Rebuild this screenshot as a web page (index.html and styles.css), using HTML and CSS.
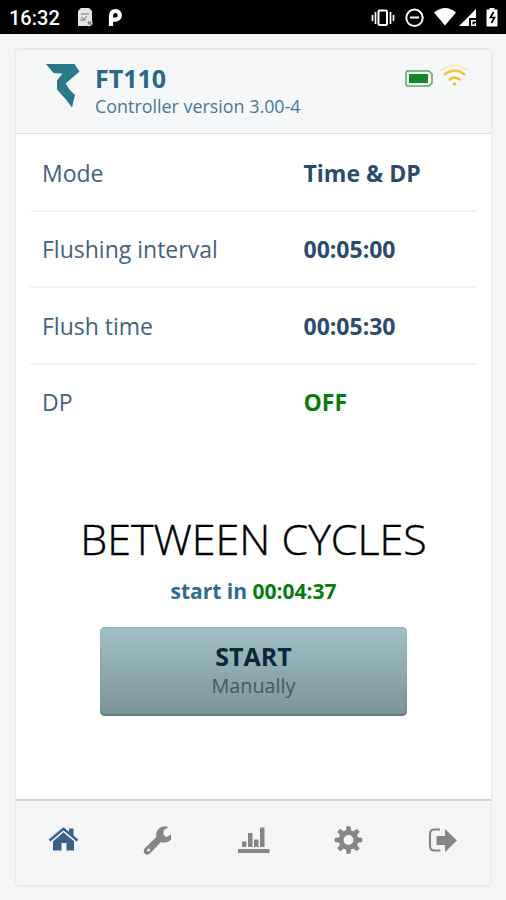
FILE: index.html
```html
<!DOCTYPE html>
<html lang="en">
<head>
<meta charset="utf-8">
<title>FT110</title>
<link rel="stylesheet" href="styles.css">
</head>
<body>
<div class="status">
  <span class="clock">16:32</span>
  <svg class="notices" viewBox="74 4 56 26" width="56" height="26">
    <path fill="#e4e4e4" d="M81 8h8l3 3v11l-2 4H78V11z"/>
    <path fill="none" stroke="#777" d="M81 14h8M81 17l3 2 3-3M80 20h6"/>
    <circle cx="89.500" cy="23" r="2.500" fill="#888" stroke="#eee" stroke-width="1.500" stroke-dasharray="1.500 .7"/>
    <path fill="none" stroke="#fff" stroke-width="4.200" d="M111 26v-9.500q0-5.500 4.500-5.500a4.300 4.300 0 0 1 0 8.600H111"/>
  </svg>
  <svg class="system" viewBox="366 4 140 26" width="140" height="26">
    <g fill="none" stroke="#fff">
      <rect x="378.500" y="10.500" width="8.500" height="14.500" rx="1" stroke-width="2"/>
      <path stroke-width="1.700" d="M375.500 12v12M390.500 12v12M372.500 15v6M393.500 15v6"/>
      <circle cx="414.500" cy="17.800" r="8.200" stroke-width="2"/>
      <path stroke-width="2" d="M410 17.500h9"/>
    </g>
    <g fill="#fff">
      <path d="M434 12.500q11.500-9 22 0L445 25.500z"/>
      <path d="M476 9v9h-7v8h-10z"/>
      <path d="M471 20h5v1.500h-3.500v3h2V23h1.500v3h-5z"/>
      <path d="M489.500 8h5v1.500h3V26.500h-11V9.500h3z"/>
    </g>
    <path fill="none" stroke="#000" stroke-width="1.700" d="M493.500 12l-3 5.500h4l-3 5.500"/>
  </svg>
</div>
<main class="card">
  <header class="header">
    <svg class="logo" viewBox="44 62 38 48" width="38" height="48">
      <path fill="#28788b" d="M46 64h28.500l5 7.500-14 12 4 6 5.500 5.500-1 4-2 8.500-6-8-9-10V80.500l5.500-7-9-.5z"/>
      <path fill="none" stroke="#4d95a4" stroke-width=".5" d="M61 81l15-13M59 87l8 9"/>
    </svg>
    <div class="ident">
      <h1 class="name">FT110</h1>
      <p class="version">Controller version 3.00-4</p>
    </div>
    <svg class="signals" viewBox="404 62 66 28" width="66" height="28">
      <path d="M407 71h22l3 3v9l-3 3h-22l-1-2V73z" fill="#f3fbf4" stroke="#5aa568" stroke-width="1.500"/>
      <path d="M409 74h19v9h-19z" fill="#148529"/>
      <g fill="none" stroke-linecap="round">
        <path stroke="#fbe6a5" stroke-width="1.500" d="M441 70q13.500-9 26 0"/>
        <path stroke="#f9c63a" stroke-width="2.300" d="M444.500 74.500q10-8 20 0"/>
        <path stroke="#f8c02c" stroke-width="2.300" d="M449.500 79.500q5-4 10 0"/>
      </g>
      <circle cx="454.500" cy="84" r="1.800" fill="#f8bd25"/>
    </svg>
  </header>
  <section class="rows">
    <div class="row"><span class="label">Mode</span><b class="value">Time &amp; DP</b></div>
    <div class="row"><span class="label">Flushing interval</span><b class="value">00:05:00</b></div>
    <div class="row"><span class="label">Flush time</span><b class="value">00:05:30</b></div>
    <div class="row"><span class="label">DP</span><b class="value off">OFF</b></div>
  </section>
  <section class="cycle">
    <h2 class="state">BETWEEN CYCLES</h2>
    <p class="next">start in <span class="time">00:04:37</span></p>
    <button class="start"><b>START</b><span>Manually</span></button>
  </section>
  <nav class="tabs">
    <svg class="active" viewBox="48 826 30 30" width="30" height="30">
      <path d="M53 842l10.500-9 10.500 9v9.500h-7.500V844h-5v7.500H53z"/>
      <path d="M69 829.500h4.500v7.500l-4.500-4z"/>
      <path fill="none" stroke="#f3f5f7" stroke-width="1" d="M51 843.500l12.500-10.700 12.500 10.700"/>
      <path fill="none" stroke="#395f8a" stroke-width="2.400" d="M49.500 841.500l14-11.700 14 11.700"/>
    </svg>
    <svg viewBox="141 826 30 30" width="30" height="30">
      <path fill-rule="evenodd" d="M169 828l-5 3.500v4.500l3 2 6-3.500q.5 8-7 9-3 .3-4.500-.5L151 854q-3 3-6 .5-2-3 1-6l11-10.500q-1.500-5 2-8 4-4 10-2zM149 849.500a1.500 1.500 0 1 0 .1 3a1.500 1.500 0 1 0-.1-3z" transform="translate(-.5 0)"/>
    </svg>
    <svg viewBox="233.500 826 36 30" width="36" height="30">
      <path d="M237.500 850h31.500v4h-31.500zM241.500 842.500h4.500v5.500h-4.500zM247.500 834h4.500v14h-4.500zM253.500 840.500h4.500v7.500h-4.500zM259.500 828.500h4.500V848h-4.500z"/>
    </svg>
    <svg viewBox="-15.500 -15 30 30" width="30" height="30">
      <circle r="7.400" fill="none" stroke="#868686" stroke-width="5"/>
      <path id="tooth" d="M-2.700-8.500l.7-5.300h4l.7 5.300z"/>
      <use href="#tooth" transform="rotate(45)"/><use href="#tooth" transform="rotate(90)"/><use href="#tooth" transform="rotate(135)"/><use href="#tooth" transform="rotate(180)"/><use href="#tooth" transform="rotate(225)"/><use href="#tooth" transform="rotate(270)"/><use href="#tooth" transform="rotate(315)"/>
    </svg>
    <svg viewBox="426 825 32 30" width="32" height="30">
      <path fill="none" stroke="#868686" stroke-width="2.200" d="M440 829.500h-5.500q-4.500 0-4.500 4.500v12q0 4.500 4.500 4.500h6"/>
      <path d="M436.500 836h8.500v-7l12 11.500L445 852v-7h-8.500z"/>
    </svg>
  </nav>
</main>
</body>
</html>
```

FILE: styles.css
```css
* { box-sizing: border-box; }
body {
  margin: 0;
  width: 506px;
  height: 900px;
  background: #f3f5f7;
  font-family: "Open Sans", sans-serif;
  color: #355377;
  display: flex;
  flex-direction: column;
  overflow: hidden;
}
h1, h2, p { margin: 0; }
svg { display: block; flex: none; }
.status {
  height: 34px;
  flex: none;
  background: #000;
  color: #fff;
  display: flex;
  align-items: center;
  padding-left: 9px;
}
.clock { font: 500 20px/34px Roboto, sans-serif; width: 65px; padding-top: 1px; }
.system { margin-left: auto; }
.card {
  height: 839px;
  margin: 14px 14px 0 15px;
  border: 1px solid #e6e9eb;
  border-width: 2px 1px 2px 1px;
  border-radius: 5px;
  background: #fff;
  display: flex;
  flex-direction: column;
  overflow: hidden;
}
.header {
  height: 84px;
  flex: none;
  background: #f5f7f9;
  border-bottom: 1px solid #dfe5e8;
  display: flex;
  padding: 12px 21px 0 28px;
}
.ident { margin-left: 13px; }
.name { font-size: 25px; line-height: 32px; font-weight: 700; color: #266888; }
.version { font-size: 17.9px; line-height: 25px; color: #487894; white-space: nowrap; }
.signals { margin-left: auto; }
.rows { padding: 1px 14px 0; flex: none; }
.row {
  height: 76.5px;
  display: flex;
  align-items: center;
  padding: 1px 0 0 12px;
  border-bottom: 2px solid #f1f3f4;
  font-size: 23px;
}
.row:last-child { border-bottom-color: transparent; }
.label { width: 261.500px; color: #45617f; }
.value { color: #2a4b6e; }
.off { color: #087c12; }
.cycle { flex: 1; display: flex; flex-direction: column; align-items: center; padding-top: 68px; }
.state { font-size: 43px; line-height: 60px; font-weight: 300; color: #000; white-space: nowrap; -webkit-text-stroke: .4px #000; }
.next { font-size: 21px; line-height: 30px; font-weight: 700; color: #2c6b8f; margin-top: 7px; }
.time { color: #087c12; }
.start {
  width: 307px;
  height: 89px;
  margin-top: 21px;
  padding: 0 0 3px;
  border: 0;
  border-radius: 5px;
  background: linear-gradient(#a1c1c6, #7b9298);
  box-shadow: inset 0 -2px 1px #617a80, inset 0 1px #8eb0b6;
  font-family: inherit;
  display: flex;
  flex-direction: column;
  align-items: center;
  justify-content: center;
  color: #0c2638;
}
.start b { font-size: 25px; line-height: 32px; }
.start span { font-size: 19.8px; line-height: 28px; color: #405a66; }
.tabs {
  height: 86px;
  flex: none;
  background: #f3f5f7;
  border-top: 2px solid #cdd1d3;
  display: flex;
  justify-content: space-between;
  padding: 24px 33px 0 32px;
  fill: #868686;
}
.active { fill: #395f8a; }
```
